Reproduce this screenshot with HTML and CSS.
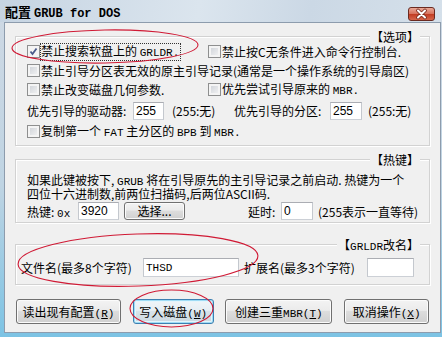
FILE: index.html
```html
<!DOCTYPE html>
<html lang="zh-CN">
<head>
  <meta charset="UTF-8">
  <title>配置 GRUB for DOS</title>
  <link rel="stylesheet" href="styles.css">
</head>
<body>

  <div class="window">
    <div class="titlebar">
      <span class="title">配置 <span class="en">GRUB for DOS</span></span>
      <span class="close">
        <svg width="25" height="12" viewBox="0 0 25 12">
          <path d="M9 2.5 L16 9.5 M16 2.5 L9 9.5" stroke="#7a2a1c" stroke-width="3.6" stroke-linecap="round"/>
          <path d="M9 2.5 L16 9.5 M16 2.5 L9 9.5" stroke="#fff" stroke-width="2" stroke-linecap="round"/>
        </svg>
      </span>
    </div>

    <div class="frame">
      <div class="client">

        <div class="group options">
          <span class="caption">【选项】</span>
          <div class="row">
            <label class="check col"><span class="box checked"></span><span class="focus">禁止搜索软盘上的 <span class="en">GRLDR.</span></span></label>
            <label class="check"><span class="box"></span><span>禁止按C无条件进入命令行控制台.</span></label>
          </div>
          <div class="row">
            <label class="check"><span class="box"></span><span>禁止引导分区表无效的原主引导记录(通常是一个操作系统的引导扇区)</span></label>
          </div>
          <div class="row">
            <label class="check col"><span class="box"></span><span>禁止改变磁盘几何参数.</span></label>
            <label class="check"><span class="box"></span><span>优先尝试引导原来的 <span class="en">MBR.</span></span></label>
          </div>
          <div class="row field-row">
            <div class="half">
              <span class="lbl drive">优先引导的驱动器:</span>
              <input class="text num w31" type="text" value="255">
              <span class="hint">(255:无)</span>
            </div>
            <span class="lbl part">优先引导的分区:</span>
            <input class="text num w32" type="text" value="255">
            <span class="hint narrow">(255:无)</span>
          </div>
          <div class="row">
            <label class="check"><span class="box"></span><span>复制第一个 <span class="en">FAT</span> 主分区的 <span class="en">BPB</span> 到 <span class="en">MBR.</span></span></label>
          </div>
        </div>

        <div class="group hotkey">
          <span class="caption">【热键】</span>
          <p class="para">如果此键被按下, <span class="en">GRUB</span> 将在引导原先的主引导记录之前启动. 热键为一个<br>四位十六进制数,前两位扫描码,后两位ASCII码.</p>
          <div class="hot-row">
            <div class="hot-left">
              <span class="lbl key">热键: <span class="en">0x</span></span>
              <input class="text num w41" type="text" value="3920">
              <button class="btn small" type="button">选择...</button>
            </div>
            <span class="lbl delay">延时:</span>
            <input class="text num w32" type="text" value="0">
            <span class="hint wait">(255表示一直等待)</span>
          </div>
        </div>

        <div class="group rename">
          <span class="caption">【<span class="en">GRLDR</span>改名】</span>
          <div class="rename-row">
            <span class="lbl fname">文件名(最多8个字符)</span>
            <input class="text mono w96" type="text" value="THSD">
            <span class="lbl ext">扩展名(最多3个字符)</span>
            <input class="text w47" type="text" value="">
          </div>
        </div>

        <div class="buttons">
          <button class="btn w105" type="button">读出现有配置<span class="en">(<u>R</u>)</span></button>
          <button class="btn w81 focused" type="button">写入磁盘<span class="en">(<u>W</u>)</span></button>
          <button class="btn w107" type="button">创建三重<span class="en">MBR(<u>T</u>)</span></button>
          <button class="btn w85" type="button">取消操作<span class="en">(<u>X</u>)</span></button>
        </div>

      </div>
    </div>

    <!-- red hand-drawn marks over the dialog -->
    <svg class="marks" width="442" height="337" viewBox="0 0 442 337">
      <ellipse cx="105" cy="46.5" rx="93" ry="16.5" transform="rotate(-1 105 46.5)"/>
      <ellipse cx="138" cy="260" rx="120" ry="26" transform="rotate(-2 138 260)"/>
      <ellipse cx="171.5" cy="308.5" rx="41.5" ry="18.5"/>
    </svg>
  </div>

</body>
</html>
```

FILE: styles.css
```css
body {
  margin: 0;
  font-family: "Noto Sans CJK SC", "Noto Sans", sans-serif;
  font-size: 12px;
  color: #000;
}

.en {
  font-family: "Liberation Mono", monospace;
  font-size: 11px;
}

.window {
  position: relative;
  width: 442px;
  height: 337px;
  display: flex;
  flex-direction: column;
  background: linear-gradient(#cfd9e4, #bfd4e3 55%, #7cc3e4);
  overflow: hidden;
}

.titlebar {
  height: 22px;
  flex: none;
  display: flex;
  justify-content: space-between;
  align-items: flex-start;
  padding: 0 7px 0 5px;
  background: linear-gradient(100deg, #c6d4e2, #dbe5ee 45%, #cbd8e5 70%, #d5e0ea);
}

.title {
  font-weight: bold;
  font-size: 13px;
  line-height: 14px;
  margin-top: 5px;
}

.title .en {
  font-size: 12px;
  font-weight: bold;
}

.close {
  width: 25px;
  height: 12px;
  margin-top: 7px;
  border: 1px solid #6a2a20;
  border-radius: 3px;
  background: linear-gradient(#e9a897, #d6705a 50%, #c13a20 50%, #d6674c);
  display: flex;
}

.frame {
  flex: 1;
  display: flex;
  padding: 0 5px 4px 4px;
}

.client {
  flex: 1;
  background: #f0f0f0;
  border: 1px solid #8d9cad;
  padding: 13px 10px 0;
}

.group {
  position: relative;
  border: 1px solid #d2d2d2;
  box-shadow: inset 1px 1px 0 #fff, 1px 1px 0 #fff;
}

.caption {
  position: absolute;
  top: -7px;
  right: 9px;
  line-height: 13px;
  padding: 0 1px;
  background: #f0f0f0;
}

.options {
  padding: 5px 11px 4px;
}

.row {
  display: flex;
  align-items: center;
  height: 19px;
  white-space: nowrap;
}

.col {
  width: 181px;
}

.check {
  display: flex;
  align-items: center;
  line-height: 13px;
}

.box {
  flex: none;
  width: 13px;
  height: 13px;
  box-sizing: border-box;
  margin-right: 1px;
  border: 1px solid #8e8f8f;
  background: linear-gradient(135deg, #cbcfd5, #f6f6f6);
  box-shadow: inset 0 0 0 2px #f4f4f4;
}

.box.checked {
  background: #f4f4f4 url("data:image/svg+xml,%3Csvg xmlns='http://www.w3.org/2000/svg' width='11' height='11'%3E%3Cpath d='M2.5 5.5 L4.5 8 L8.5 2.5' fill='none' stroke='%234a5a8a' stroke-width='1.8'/%3E%3C/svg%3E") center / 11px 11px no-repeat;
  box-shadow: none;
}

.focus {
  outline: 1px dotted #333;
  outline-offset: 0;
  padding: 0 1px 0 0;
}

.field-row {
  height: 23px;
}

.half {
  display: flex;
  align-items: center;
  width: 207px;
}

.lbl {
  flex: none;
}

.drive {
  width: 106px;
}

.part {
  width: 96px;
}

.hint {
  margin-left: 8px;
}

.hint.narrow {
  margin-left: 6px;
}

.text {
  flex: none;
  box-sizing: border-box;
  height: 18px;
  margin: 0;
  padding: 0 2px;
  border: 1px solid;
  border-color: #abadb3 #c4c8ce #ccd0d6 #c4c8ce;
  background: #fff;
  font-family: "Liberation Sans", sans-serif;
  font-size: 12px;
  color: #000;
  outline: none;
}

.text.mono {
  font-family: "Liberation Mono", monospace;
  font-size: 11px;
}

.w31 { width: 31px; }
.w32 { width: 32px; }
.w41 { width: 41px; }
.w47 { width: 47px; height: 19px; }
.w96 { width: 96px; height: 19px; }

.hotkey {
  margin-top: 13px;
  padding: 14px 11px 2px;
}

.para {
  margin: 0;
  line-height: 12px;
  white-space: nowrap;
}

.hot-row {
  display: flex;
  align-items: center;
  height: 18px;
  margin-top: 2px;
  white-space: nowrap;
}

.hot-left {
  display: flex;
  align-items: center;
  width: 221px;
}

.key {
  width: 51px;
}

.delay {
  width: 33px;
}

.wait {
  margin-left: 5px;
}

.rename {
  margin-top: 21px;
  padding: 13px 5px 7px;
}

.rename-row {
  display: flex;
  align-items: center;
  height: 19px;
  white-space: nowrap;
}

.fname {
  width: 122px;
}

.ext {
  width: 123px;
  margin-left: 5px;
}

.btn {
  height: 25px;
  box-sizing: border-box;
  padding: 0;
  border: 1px solid #707070;
  border-radius: 3px;
  background: linear-gradient(#f3f3f3, #ebebeb 45%, #dddddd 50%, #d0d0d0);
  box-shadow: inset 0 0 0 1px #fbfbfb;
  font-family: "Noto Sans CJK SC", sans-serif;
  font-size: 12px;
  color: #000;
  white-space: nowrap;
}

.btn.small {
  width: 61px;
  height: 18px;
  margin-left: 5px;
  line-height: 14px;
}

.btn.focused {
  border-color: #3c7fb1;
  background: linear-gradient(#f0f6f9, #e6eef3 45%, #d8e3ea 50%, #cbd8e0);
  box-shadow: inset 0 0 0 1px #9fdcf5, inset 0 0 0 2px #e4f5fc;
}

.w105 { width: 105px; }
.w81 { width: 81px; }
.w107 { width: 107px; }
.w85 { width: 85px; }

.buttons {
  display: flex;
  justify-content: space-between;
  margin-top: 14px;
  padding: 0 1px;
}

.marks {
  position: absolute;
  top: 0;
  left: 0;
  pointer-events: none;
}

.marks ellipse {
  fill: none;
  stroke: #d01a35;
  stroke-width: 1.1;
}
```
